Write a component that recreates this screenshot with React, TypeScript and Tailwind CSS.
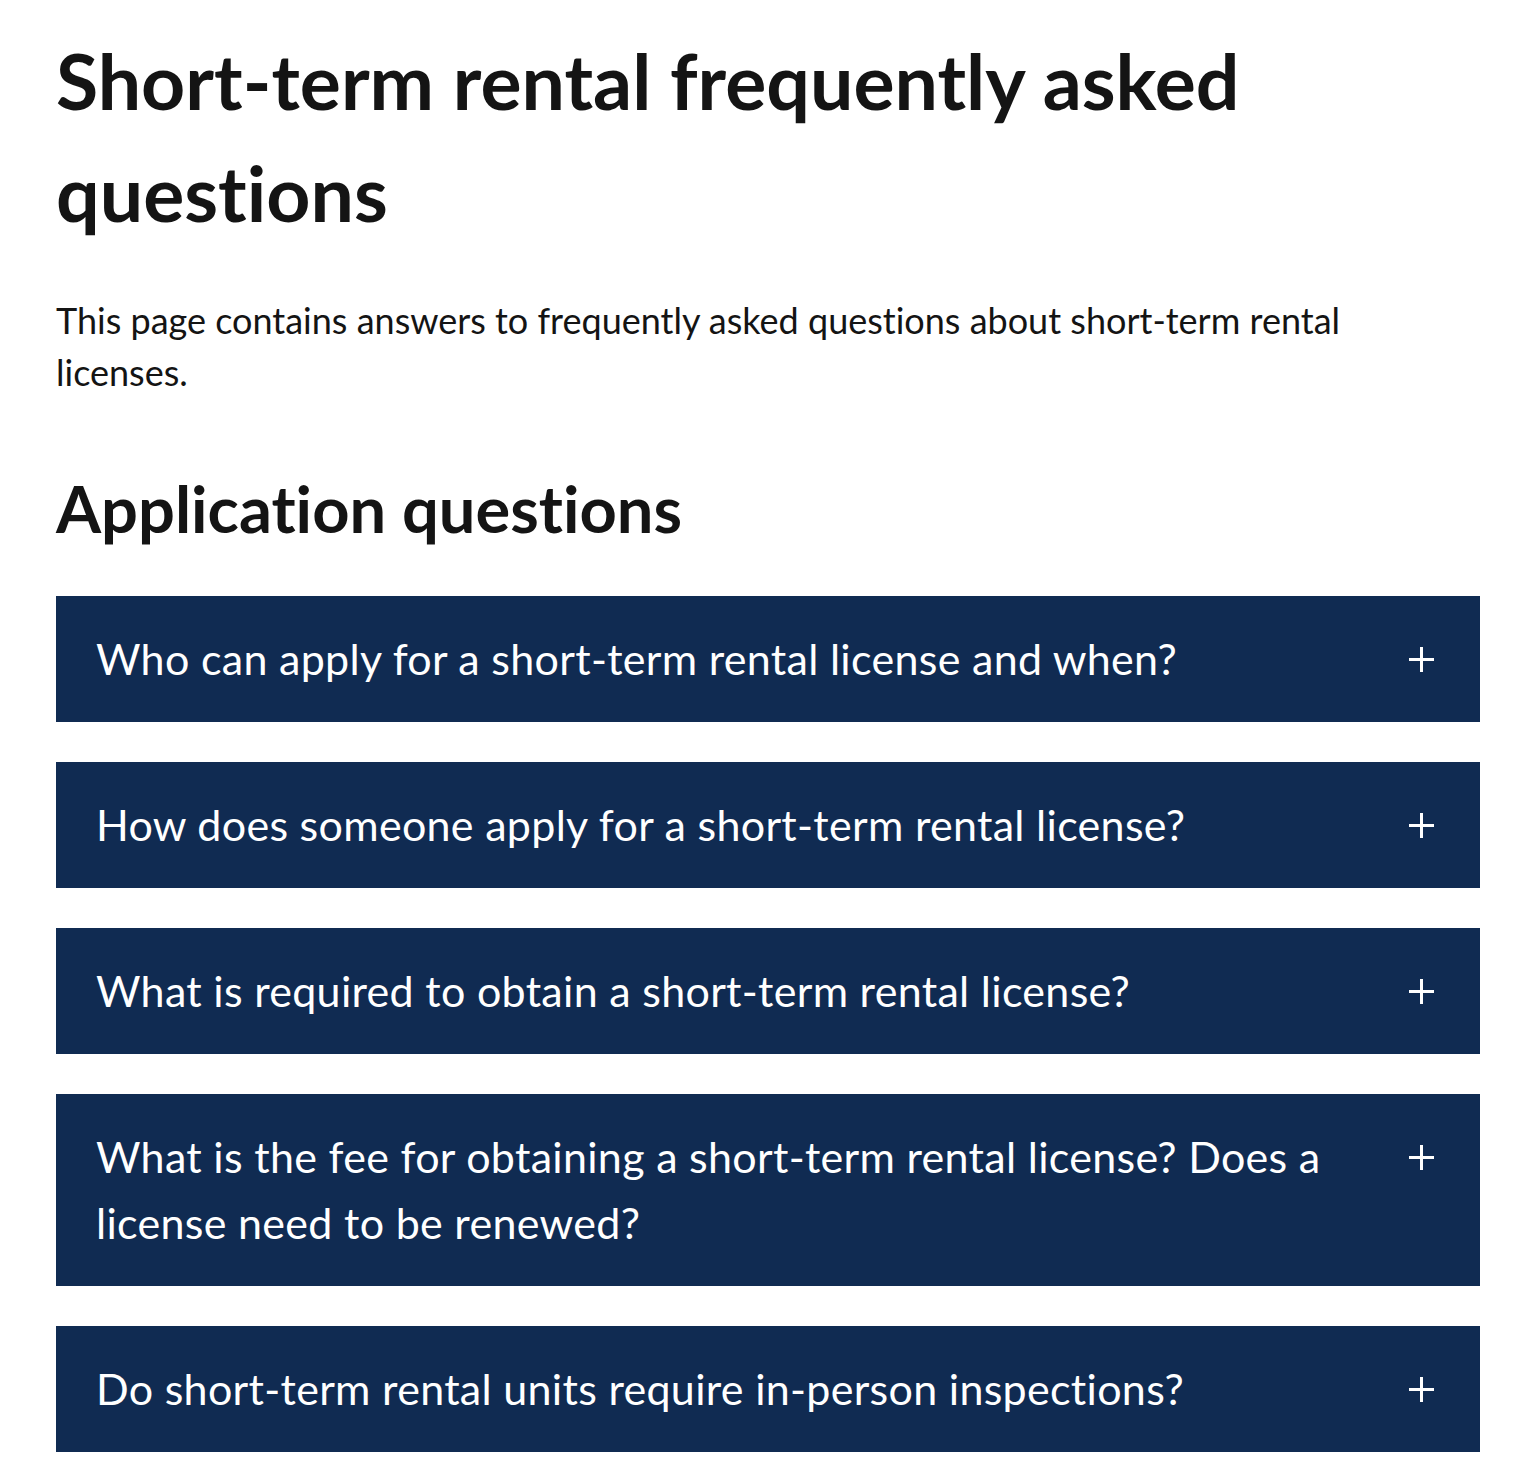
import { useState } from 'react';

const questions = [
  'Who can apply for a short-term rental license and when?',
  'How does someone apply for a short-term rental license?',
  'What is required to obtain a short-term rental license?',
  'What is the fee for obtaining a short-term rental license? Does a license need to be renewed?',
  'Do short-term rental units require in-person inspections?',
];

function Plus() {
  return (
    <svg width="25" height="25" viewBox="0 0 25 25" fill="none" stroke="currentColor" strokeWidth="3">
      <path d="M12.5 0v25M0 12.5h25" />
    </svg>
  );
}

export default function App() {
  const [open, setOpen] = useState<number | null>(null);

  return (
    <div className="bg-white text-[#141414] font-['Lato','Liberation_Sans',sans-serif] [font-variant-ligatures:none]">
      <div className="pl-[56px] pr-[40px] pt-[24px]">
        <h1 className="text-[77px] font-bold leading-[112px]">Short-term rental frequently asked questions</h1>

        <p className="mt-[46px] max-w-[1320px] text-[36px] leading-[52px]">
          This page contains answers to frequently asked questions about short-term rental licenses.
        </p>

        <h2 className="mt-[65px] text-[65px] font-bold leading-[90px]">Application questions</h2>

        <div className="mt-[43px] flex flex-col gap-[40px]">
          {questions.map((q, i) => (
            <div key={i} className="bg-[#102b52] text-white">
              <button
                onClick={() => setOpen(open === i ? null : i)}
                className="flex w-full items-start text-left pl-[40px] pr-[46px] py-[30px]"
              >
                <span className="flex-1 pr-[60px] text-[43px] leading-[66px] tracking-[0.3px]">{q}</span>
                <span className="flex h-[66px] items-center">
                  <Plus />
                </span>
              </button>
            </div>
          ))}
        </div>
      </div>
    </div>
  );
}
